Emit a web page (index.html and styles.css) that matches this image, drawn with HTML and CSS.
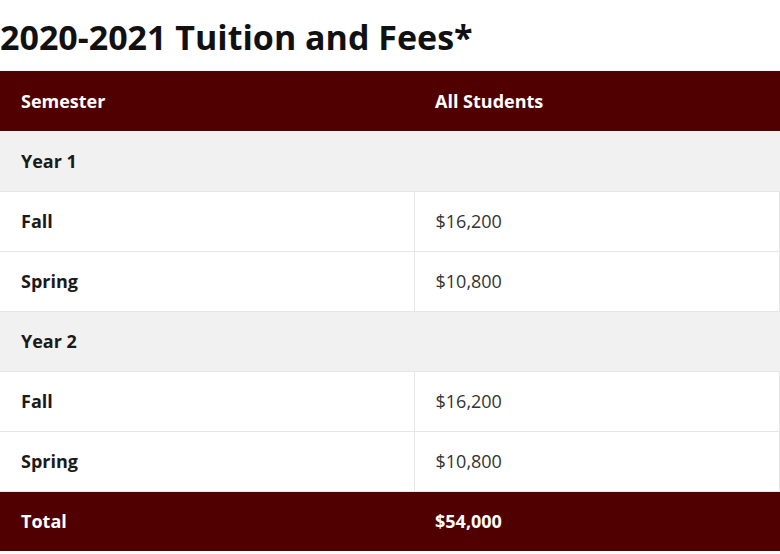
FILE: index.html
```html
<!DOCTYPE html>
<html>
<head>
<meta charset="utf-8">
<link rel="stylesheet" href="styles.css">
</head>
<body>
<h2 class="title">2020-2021 Tuition and Fees*</h2>
<table class="fees">
  <thead>
    <tr class="head"><th class="c1">Semester</th><th class="c2">All Students</th></tr>
  </thead>
  <tbody>
    <tr class="year"><td class="c1" colspan="2">Year 1</td></tr>
    <tr class="row"><td class="c1">Fall</td><td class="c2">$16,200</td></tr>
    <tr class="row"><td class="c1">Spring</td><td class="c2">$10,800</td></tr>
    <tr class="year"><td class="c1" colspan="2">Year 2</td></tr>
    <tr class="row"><td class="c1">Fall</td><td class="c2">$16,200</td></tr>
    <tr class="row"><td class="c1">Spring</td><td class="c2">$10,800</td></tr>
  </tbody>
  <tfoot>
    <tr class="head"><td class="c1">Total</td><td class="c2">$54,000</td></tr>
  </tfoot>
</table>
</body>
</html>
```
FILE: styles.css
```css
html, body {
  margin: 0;
  padding: 0;
  background: #ffffff;
}
body {
  font-family: "Open Sans", "Noto Sans", sans-serif;
  color: #1a1a1a;
}
.title {
  margin: 0;
  padding-top: 15px;
  height: 71px;
  box-sizing: border-box;
  font-size: 34px;
  line-height: 44px;
  font-weight: 700;
  color: #111;
}
.fees {
  width: 100%;
  border-collapse: collapse;
  table-layout: fixed;
  font-size: 18px;
}
.fees th, .fees td {
  height: 60px;
  box-sizing: border-box;
  padding: 0 20px 0 21px;
  text-align: left;
  vertical-align: middle;
}
.fees .c1 { width: 414px; font-weight: 700; }
.head th, .head td {
  background: #510000;
  color: #ffffff;
  font-weight: 700;
}
.year td {
  background: #f1f1f1;
  color: #1a1a1a;
}
.row td {
  background: #ffffff;
  border-top: 1px solid #e6e6e6;
  border-bottom: 1px solid #e6e6e6;
}
.row td.c2 {
  border-left: 1px solid #e6e6e6;
  border-right: 1px solid #e6e6e6;
  font-weight: 400;
  color: #333;
}
```
